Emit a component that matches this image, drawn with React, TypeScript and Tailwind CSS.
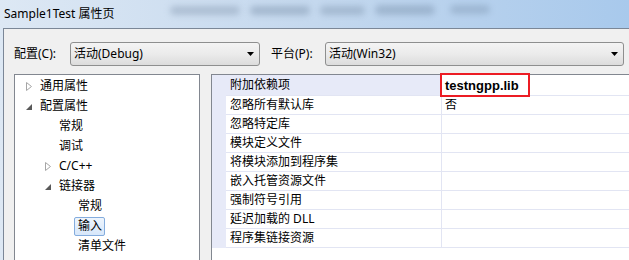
const font = "font-['Noto_Sans','Noto_Sans_CJK_SC',sans-serif]";

type TreeItem = { label: string; level: number; arrow?: "open" | "closed"; selected?: boolean };

const tree: TreeItem[] = [
  { label: "通用属性", level: 0, arrow: "closed" },
  { label: "配置属性", level: 0, arrow: "open" },
  { label: "常规", level: 1 },
  { label: "调试", level: 1 },
  { label: "C/C++", level: 1, arrow: "closed" },
  { label: "链接器", level: 1, arrow: "open" },
  { label: "常规", level: 2 },
  { label: "输入", level: 2, selected: true },
  { label: "清单文件", level: 2 },
];

const props: { name: string; value?: string; bold?: boolean }[] = [
  { name: "附加依赖项", value: "testngpp.lib", bold: true },
  { name: "忽略所有默认库", value: "否" },
  { name: "忽略特定库" },
  { name: "模块定义文件" },
  { name: "将模块添加到程序集" },
  { name: "嵌入托管资源文件" },
  { name: "强制符号引用" },
  { name: "延迟加载的 DLL" },
  { name: "程序集链接资源" },
];

function Arrow({ kind }: { kind?: "open" | "closed" }) {
  if (kind === "closed")
    return (
      <svg width="6" height="9" viewBox="0 0 6 9">
        <polygon points="0.5,0.5 5.5,4.5 0.5,8.5" fill="#fff" stroke="#a6a6a6" />
      </svg>
    );
  if (kind === "open")
    return (
      <svg width="6" height="6" viewBox="0 0 6 6" className="mt-[2px]">
        <polygon points="6,0 6,6 0,6" fill="#595959" />
      </svg>
    );
  return null;
}

function Combo({ text, w }: { text: string; w: string }) {
  return (
    <div className={`${w} flex h-[24px] items-center justify-between rounded-[3px] border border-[#8e8f8f] bg-gradient-to-b from-[#f4f4f4] via-[#ebebeb] to-[#dcdcdc] pl-[3px] pr-[5px]`}>
      <span className="text-[12px] leading-none text-black">{text}</span>
      <svg width="7" height="4" viewBox="0 0 7 4"><polygon points="0,0 7,0 3.5,4" fill="#000" /></svg>
    </div>
  );
}

export default function App() {
  return (
    <div className={`relative h-[260px] w-[629px] overflow-hidden bg-gradient-to-r from-[#dde8f4] via-[#c4d8ee] to-[#a8c9ec] ${font}`}>
      {/* blurred window text behind glass */}
      <div className="absolute left-[170px] top-[6px] h-[9px] w-[70px] rounded-full bg-[#8c9fb6] opacity-50 blur-[3px]" />
      <div className="absolute left-[250px] top-[6px] h-[9px] w-[60px] rounded-full bg-[#7f95ae] opacity-50 blur-[3px]" />
      <div className="absolute left-[320px] top-[6px] h-[9px] w-[45px] rounded-full bg-[#7f95ae] opacity-45 blur-[3px]" />
      <div className="absolute left-[375px] top-[5px] h-[10px] w-[60px] rounded-full bg-[#7890ab] opacity-45 blur-[3px]" />
      <div className="absolute left-[450px] top-[5px] h-[9px] w-[40px] rounded-full bg-[#7890ab] opacity-40 blur-[3px]" />

      <div className="relative flex h-[28px] items-center pl-[4px] text-[12px] text-black">Sample1Test 属性页</div>

      <div className="ml-[3px] h-[232px] border-l border-t border-[#7b8797] bg-[#f0f0f0] text-[12px] text-black">
        <div className="flex items-center pl-[10px] pt-[13px]">
          <span className="w-[56px] leading-none">配置(C):</span>
          <Combo text="活动(Debug)" w="w-[190px]" />
          <span className="ml-[11px] w-[54px] leading-none">平台(P):</span>
          <Combo text="活动(Win32)" w="w-[299px]" />
        </div>

        <div className="mt-[8px] flex pl-[10px]">
          <div className="h-[200px] w-[186px] border-l border-r border-t border-[#828790] bg-white pt-[1px]">
            {tree.map((t, i) => (
              <div key={i} className="flex h-[20px] items-center" style={{ paddingLeft: 11 + t.level * 19 }}>
                <span className="flex w-[14px] items-center">
                  <Arrow kind={t.arrow} />
                </span>
                {t.selected ? (
                  <span className="-ml-[4px] flex h-[19px] items-center rounded-[2px] border border-[#84acdd] bg-gradient-to-b from-[#eef5fd] to-[#d7e7fa] pl-[3px] pr-[2px] leading-none">
                    {t.label}
                  </span>
                ) : (
                  <span className="leading-none">{t.label}</span>
                )}
              </div>
            ))}
          </div>

          <div className="ml-[11px] h-[200px] flex-1 border-l border-t border-[#828790] bg-white">
            {props.map((p, i) => (
              <div key={i} className={`flex ${i === 0 ? "h-[21px]" : "h-[19px]"}`}>
                <div className="w-[14px] bg-[#e7eaf8]" />
                <div className={`flex w-[215px] items-center border-b border-[#e2e5f3] pl-[4px] leading-none ${i === 0 ? "bg-[#e7eaf8]" : ""}`}>
                  {p.name}
                </div>
                <div className="flex flex-1 items-center border-b border-l border-[#e2e5f3] pl-[3px] leading-none">
                  {p.bold ? (
                    <span className="font-['Liberation_Sans',sans-serif] text-[13px] font-bold">{p.value}</span>
                  ) : (
                    p.value
                  )}
                </div>
              </div>
            ))}
          </div>
        </div>
      </div>

      <div className="absolute left-[440px] top-[73px] h-[24px] w-[90px] border-2 border-[#ec1c24]" />
    </div>
  );
}
